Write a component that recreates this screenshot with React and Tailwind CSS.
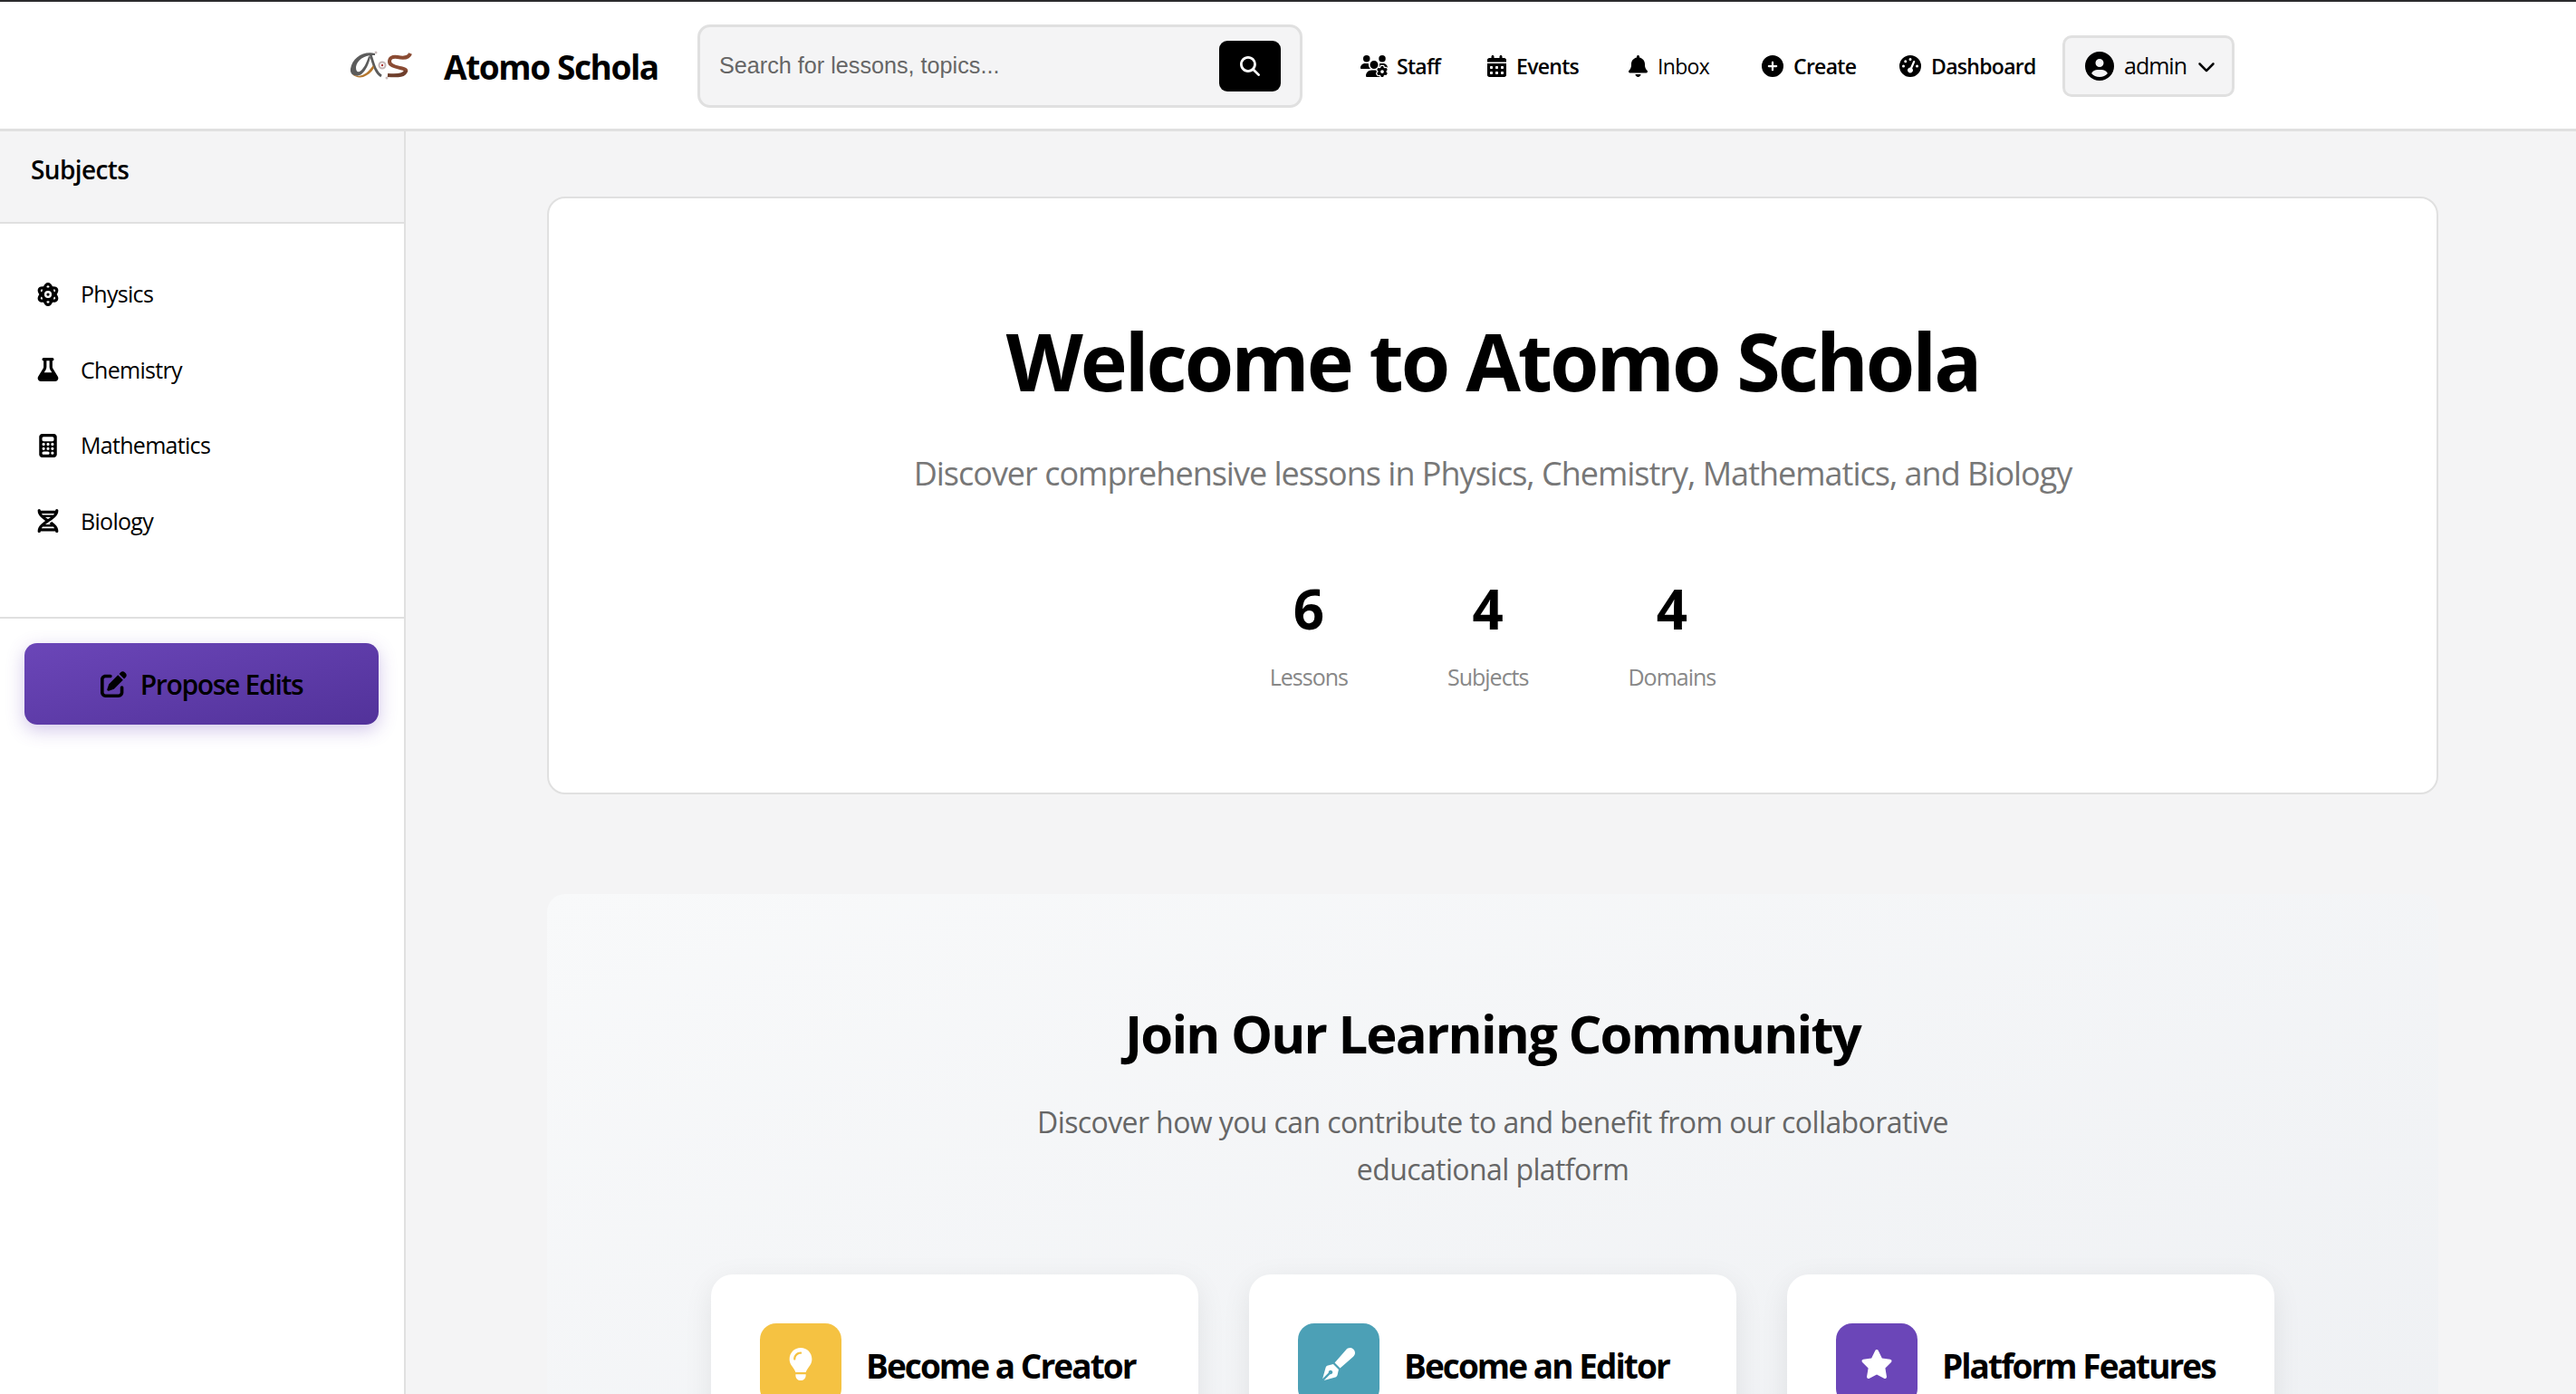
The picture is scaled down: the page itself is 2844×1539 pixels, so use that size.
import { FaAtom, FaFlask, FaCalculator, FaDna, FaPenToSquare, FaMagnifyingGlass, FaUsersGear, FaCalendarDays, FaBell, FaCirclePlus, FaGaugeHigh, FaCircleUser, FaChevronDown, FaLightbulb, FaPenFancy, FaStar } from "react-icons/fa6";

const Logo = () => (
    <svg viewBox="0 0 72 34" className="w-[72px] h-[34px] shrink-0">
        <path d="M29 3C16 0 4 8 2 20c-1 7 6 10 12 6 5-4 8-11 10-19l-2-1c-2 7-6 15-10 17-3 1-4-1-4-5C9 10 18 4 29 5Z" fill="#5c5c5c" />
        <path d="M24 4c3 9 5 20 12 24" fill="none" stroke="#5c5c5c" strokeWidth="2.8" />
        <path d="M4 26c5 3 9 2 13 0 4-2 7-6 10-10l1 3c-3 5-7 8-12 10-5 1-9 0-12-3Z" fill="#b5772f" />
        <path d="M68 3c-2 6-9 5-14 4-6-1-9 1-9 5 0 5 8 6 12 7 5 1 7 2 6 4" fill="none" stroke="#8a4b33" strokeWidth="4" />
        <path d="M63 22c-1 5-7 6-20 5" fill="none" stroke="#6f3f2c" strokeWidth="4" />
        <circle cx="37" cy="16" r="3.5" fill="none" stroke="#c4b5b5" strokeWidth="2" />
        <circle cx="37" cy="16" r="1.2" fill="#a33" />
        <circle cx="30" cy="2" r="1.5" fill="#c9bcbc" />
        <circle cx="42" cy="30" r="1.5" fill="#c9bcbc" />
    </svg>
);

const subjects = [
    { name: "Physics", icon: FaAtom },
    { name: "Chemistry", icon: FaFlask },
    { name: "Mathematics", icon: FaCalculator },
    { name: "Biology", icon: FaDna },
];

const navItems = [
    { label: "Staff", icon: FaUsersGear, cls: "w-[30px] h-[24px]", gap: "gap-[10px]", width: "w-[140px]", text: "font-semibold" },
    { label: "Events", icon: FaCalendarDays, cls: "w-[21px] h-[24px]", gap: "gap-[11px]", width: "w-[156px]", text: "font-semibold" },
    { label: "Inbox", icon: FaBell, cls: "w-[21px] h-[24px]", gap: "gap-[11px]", width: "w-[147px]", text: "font-normal" },
    { label: "Create", icon: FaCirclePlus, cls: "w-[24px] h-[24px]", gap: "gap-[11px]", width: "w-[152px]", text: "font-semibold" },
    { label: "Dashboard", icon: FaGaugeHigh, cls: "w-[24px] h-[24px]", gap: "gap-[11px]", width: "w-[180px]", text: "font-semibold" },
];

const stats = [
    { value: 6, label: "Lessons" },
    { value: 4, label: "Subjects" },
    { value: 4, label: "Domains" },
];

const joinCards = [
    { title: "Become a Creator", icon: FaLightbulb, bg: "bg-[#f5c242]" },
    { title: "Become an Editor", icon: FaPenFancy, bg: "bg-[#4ca0b6]" },
    { title: "Platform Features", icon: FaStar, bg: "bg-[#6b46b8]" },
];

export default function App() {
    return (
        <div className="h-screen overflow-hidden flex flex-col bg-[#f4f4f5] text-black font-['Open_Sans',sans-serif]">
            <header className="h-[145px] shrink-0 bg-white border-t-2 border-t-[#2b2b2d] border-b-[3px] border-b-[#e0e0e0] flex items-center pt-[2px] pl-[385px]">
                <Logo />
                <span className="ml-[33px] mt-[2px] w-[247px] text-[37px] font-bold tracking-[-1.4px] whitespace-nowrap">Atomo Schola</span>
                <div className="ml-[33px] w-[668px] h-[92px] shrink-0 rounded-[14px] border-[3px] border-[#e0e0e0] bg-[#f4f4f5] flex items-center justify-between pl-[21px] pr-[21px]">
                    <span className="font-['Liberation_Sans',sans-serif] text-[25.2px] text-[#666]">Search for lessons, topics...</span>
                    <div className="w-[68px] h-[56px] rounded-[9px] bg-black flex items-center justify-center">
                        <FaMagnifyingGlass className="w-[22px] h-[22px] text-white" />
                    </div>
                </div>
                <nav className="ml-[64px] flex items-center text-[23px] tracking-[-0.7px]">
                    {navItems.map((item) => (
                        <div key={item.label} className={`flex items-center ${item.gap} ${item.width} ${item.text} whitespace-nowrap`}>
                            <item.icon className={item.cls} />
                            <span>{item.label}</span>
                        </div>
                    ))}
                </nav>
                <div className="w-[190px] h-[68px] shrink-0 rounded-[10px] border-[3px] border-[#e0e0e0] bg-[#f4f4f5] flex items-center pl-[22px] gap-[11px] text-[25px] tracking-[-1px]">
                    <FaCircleUser className="w-[32px] h-[32px]" />
                    <span>admin</span>
                    <FaChevronDown className="w-[22px] h-[20px]" />
                </div>
            </header>

            <div className="flex flex-1 min-h-0">
                <aside className="w-[448px] shrink-0 bg-white border-r-2 border-[#e0e0e0]">
                    <div className="h-[102px] bg-[#f4f4f5] border-b-2 border-[#e0e0e0] flex items-center pl-[34px] pb-[16px] text-[28px] font-semibold tracking-[-0.6px]">
                        Subjects
                    </div>
                    <ul className="pt-[36px] pb-[64px] border-b-2 border-[#e0e0e0]">
                        {subjects.map((s) => (
                            <li key={s.name} className="h-[83.5px] flex items-center pl-[40px] gap-[23px] text-[25px] tracking-[-0.7px]">
                                <span className="w-[26px] flex justify-center">
                                    <s.icon className="w-[26px] h-[26px]" />
                                </span>
                                <span>{s.name}</span>
                            </li>
                        ))}
                    </ul>
                    <div className="pt-[27px] px-[27px]">
                        <div className="w-[391px] h-[90px] rounded-[14px] bg-gradient-to-br from-[#6b46b8] to-[#52329a] shadow-[0_6px_20px_rgba(107,70,184,0.3)] flex items-center justify-center gap-[15px] text-[30px] font-semibold tracking-[-1.3px]">
                            <FaPenToSquare className="w-[29px] h-[29px]" />
                            <span>Propose Edits</span>
                        </div>
                    </div>
                </aside>

                <main className="flex-1 min-w-0 pl-[156px] pr-[152px] pt-[72px]">
                    <section className="h-[660px] bg-white border-2 border-[#e0e0e0] rounded-[20px] flex flex-col items-center pt-[121px]">
                        <h1 className="text-[88px] leading-[116px] font-bold tracking-[-3px] whitespace-nowrap">Welcome to Atomo Schola</h1>
                        <p className="mt-[42px] text-[36px] leading-[50px] text-[#777] tracking-[-1px] whitespace-nowrap">Discover comprehensive lessons in Physics, Chemistry, Mathematics, and Biology</p>
                        <div className="mt-[89px] flex gap-[110px]">
                            {stats.map((st) => (
                                <div key={st.label} className="flex flex-col items-center">
                                    <span className="text-[60px] leading-[70px] font-bold">{st.value}</span>
                                    <span className="mt-[23px] text-[25px] leading-[34px] text-[#888] tracking-[-1px]">{st.label}</span>
                                </div>
                            ))}
                        </div>
                    </section>

                    <section className="mt-[110px] h-[700px] rounded-[20px] bg-gradient-to-br from-[#f8f9fa] to-[#eef0f3] px-[181px] pt-[116px]">
                        <h2 className="text-center text-[58px] leading-[76px] font-bold tracking-[-1.8px]">Join Our Learning Community</h2>
                        <p className="mt-[34px] mx-auto max-w-[1060px] text-center text-[32px] leading-[52px] text-[#666] tracking-[-0.6px]">
                            Discover how you can contribute to and benefit from our collaborative educational platform
                        </p>
                        <div className="mt-[90px] grid grid-cols-3 gap-[56px]">
                            {joinCards.map((c) => (
                                <div key={c.title} className="h-[300px] bg-white rounded-[24px] shadow-[0_8px_32px_rgba(0,0,0,0.08)] p-[54px] flex items-start gap-[27px]">
                                    <div className={`w-[90px] h-[90px] shrink-0 rounded-[18px] flex items-center justify-center ${c.bg}`}>
                                        <c.icon className="w-[36px] h-[36px] text-white" />
                                    </div>
                                    <h3 className="mt-[22px] text-[37px] leading-[50px] font-bold tracking-[-1.95px] whitespace-nowrap">{c.title}</h3>
                                </div>
                            ))}
                        </div>
                    </section>
                </main>
            </div>
        </div>
    );
}
